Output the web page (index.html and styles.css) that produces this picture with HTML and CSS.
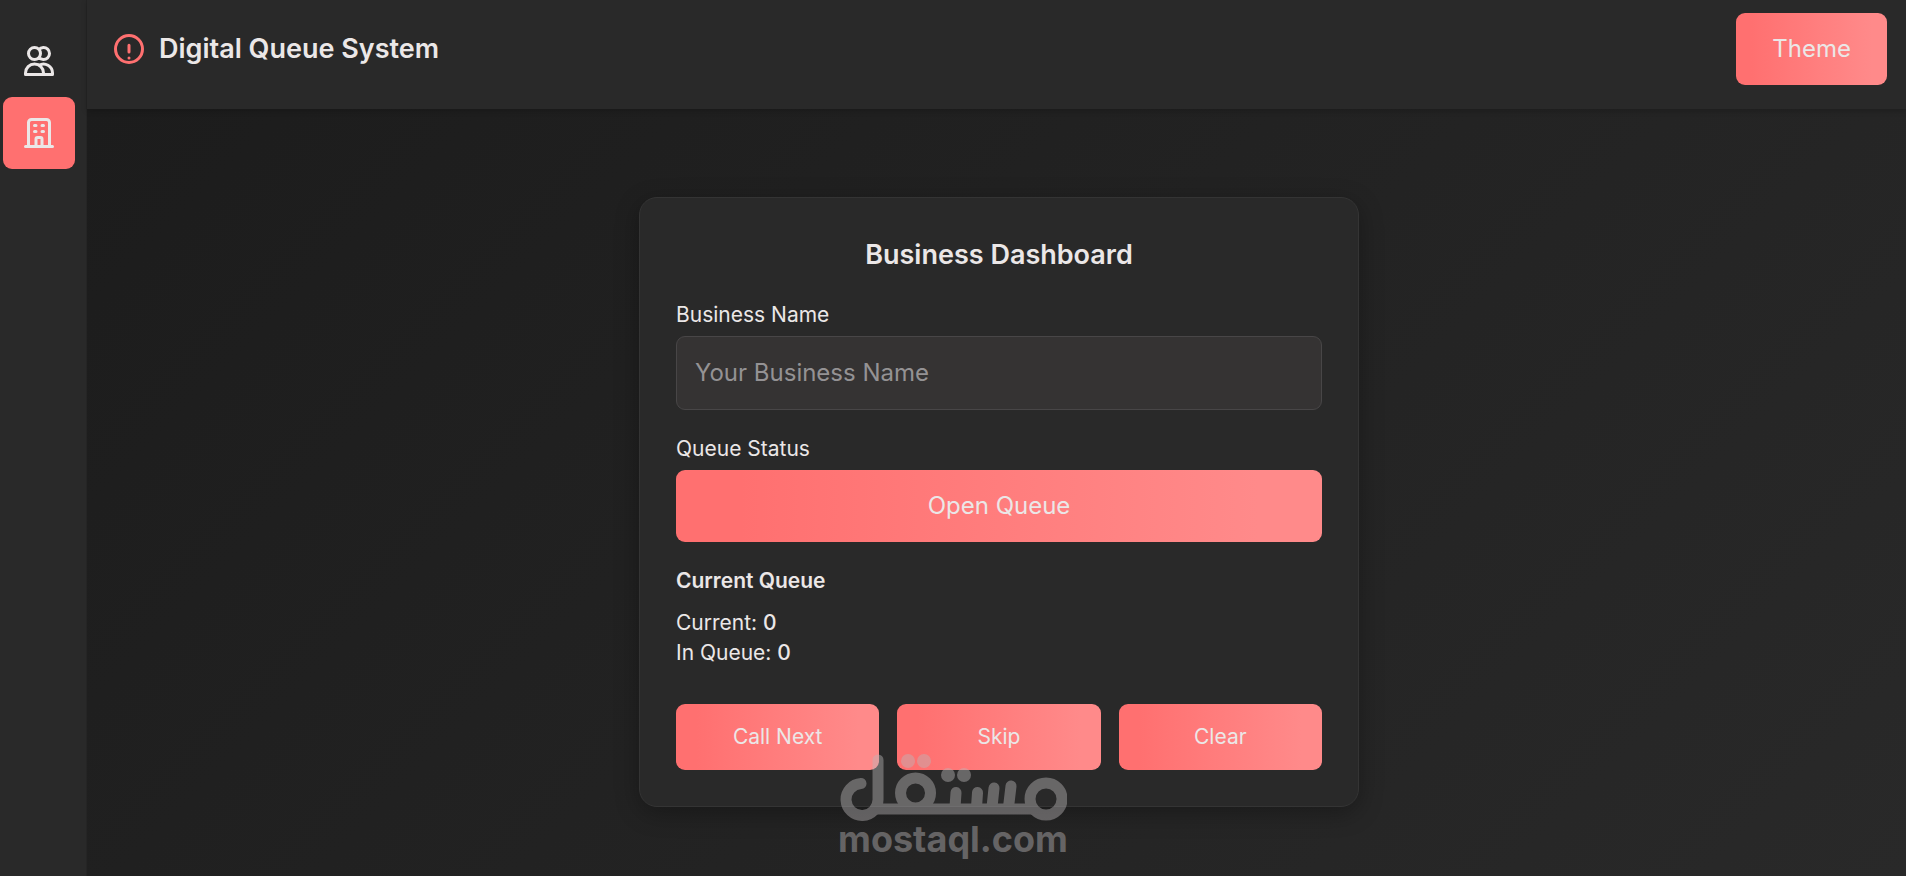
FILE: index.html
```html
<!DOCTYPE html>
<html lang="en">
<head>
<meta charset="utf-8">
<meta name="viewport" content="width=device-width, initial-scale=1">
<title>Digital Queue System</title>
<link rel="stylesheet" href="styles.css">
</head>
<body>
<div class="app">
  <nav class="sidebar" aria-label="Main">
    <button class="nav-button" type="button" aria-label="Customer">
      <svg class="icon" viewBox="0 0 24 24"><path d="M12 4.354a4 4 0 110 5.292M15 21H3v-1a6 6 0 0112 0v1zm0 0h6v-1a6 6 0 00-9-5.197M13 7a4 4 0 11-8 0 4 4 0 018 0z"/></svg>
    </button>
    <button class="nav-button nav-button-active" type="button" aria-label="Business">
      <svg class="icon" viewBox="0 0 24 24"><path d="M19 21V5a2 2 0 00-2-2H7a2 2 0 00-2 2v16m14 0h2m-2 0h-5m-9 0H3m2 0h5M9 7h1m-1 4h1m4-4h1m-1 4h1m-5 10v-5a1 1 0 011-1h2a1 1 0 011 1v5m-4 0h4"/></svg>
    </button>
  </nav>
  <div class="content">
    <header class="header">
      <div class="brand">
        <svg class="icon brand-icon" viewBox="0 0 24 24" aria-hidden="true"><circle cx="12" cy="12" r="9"/><path d="M12 9.500v4.500m0 4h.01"/></svg>
        <h1 class="title">Digital Queue System</h1>
      </div>
      <button class="button" type="button">Theme</button>
    </header>
    <main class="main">
      <section class="card">
        <h2 class="card-title">Business Dashboard</h2>
        <div class="field">
          <label class="label" for="business-name">Business Name</label>
          <input class="input" id="business-name" type="text" placeholder="Your Business Name">
        </div>
        <div class="field">
          <label class="label" for="queue-toggle">Queue Status</label>
          <button class="button" id="queue-toggle" type="button">Open Queue</button>
        </div>
        <div class="queue">
          <h3 class="queue-title">Current Queue</h3>
          <p class="line">Current: <span class="value">0</span></p>
          <p class="line">In Queue: <span class="value">0</span></p>
        </div>
        <div class="actions">
          <button class="button button-small" type="button">Call Next</button>
          <button class="button button-small" type="button">Skip</button>
          <button class="button button-small" type="button">Clear</button>
        </div>
      </section>
    </main>
  </div>
</div>
<div class="watermark">
  <svg class="watermark-logo" viewBox="0 0 228 68" role="img" aria-label="مستقل">
    <g fill="none" stroke="currentColor" stroke-width="11" stroke-linecap="round" stroke-linejoin="round">
      <path d="M22 29.500A16 16 0 1 0 39 45V6"/>
      <path d="M36 55H196" stroke-linecap="butt"/>
      <circle cx="76.500" cy="39" r="15"/>
      <path d="M116 53L117 38.500M137.500 53L138.500 38.500M153 53L155 34M169.500 53L172 32"/>
      <circle cx="207" cy="45" r="16"/>
    </g>
    <g fill="currentColor"><circle cx="69" cy="7" r="7"/><circle cx="85" cy="7" r="7"/><circle cx="109" cy="21" r="7"/><circle cx="125" cy="21" r="7"/></g>
  </svg>
  <span class="watermark-text">mostaql.com</span>
</div>
</body>
</html>
```
FILE: styles.css
```css
* { box-sizing: border-box; }
body {
  margin: 0;
  font-family: Inter, "Liberation Sans", sans-serif;
  color: #ebe7e7;
  background: #1e1e1e;
}
h1, h2, h3, p { margin: 0; }
button, input { font: inherit; color: inherit; }
.app {
  display: flex;
  min-height: 100vh;
  background: linear-gradient(135deg, #1b1b1b, #292929);
}
.sidebar {
  display: flex;
  flex-direction: column;
  width: 87px;
  padding: 25px 3px;
  background: #292929;
  border-right: 1px solid #252525;
}
.nav-button {
  display: flex;
  width: 72px;
  padding: 18px;
  background: none;
  border: 0;
  border-radius: 9px;
}
.nav-button-active { background: #ff7070; }
.icon {
  display: block;
  width: 36px;
  height: 36px;
  fill: none;
  stroke: currentColor;
  stroke-width: 2;
  stroke-linecap: round;
  stroke-linejoin: round;
}
.content {
  display: flex;
  flex: 1;
  flex-direction: column;
}
.header {
  display: flex;
  align-items: flex-start;
  justify-content: space-between;
  padding: 13px 19px 24px 24px;
  background: #292929;
  box-shadow: 0 2px 6px rgba(0, 0, 0, 0.2);
}
.brand {
  display: flex;
  align-items: center;
  gap: 12px;
  height: 72px;
}
.brand-icon { color: #ff7070; }
.title, .card-title {
  font-size: 27px;
  line-height: 42px;
  font-weight: 600;
}
.button {
  padding: 18px 36px;
  font-size: 24px;
  line-height: 36px;
  font-weight: 400;
  background: linear-gradient(90deg, #ff7070 10%, #ff8a8a 90%);
  border: 0;
  border-radius: 9px;
}
.button-small {
  font-size: 21px;
  line-height: 30px;
}
.main {
  display: flex;
  flex: 1;
  align-items: flex-start;
  justify-content: center;
  padding: 88px 0 48px 5px;
}
.card {
  display: flex;
  flex-direction: column;
  width: 720px;
  padding: 36px;
  background: #292929;
  border: 1px solid #343434;
  border-radius: 18px;
  box-shadow: 0 6px 24px rgba(0, 0, 0, 0.3);
}
.card-title { text-align: center; margin-bottom: 24px; }
.field {
  display: flex;
  flex-direction: column;
  gap: 6px;
  margin-bottom: 24px;
}
.label, .line {
  font-size: 21px;
  line-height: 30px;
}
.input {
  padding: 18px;
  font-size: 24px;
  line-height: 36px;
  background: #353333;
  border: 1px solid #484647;
  border-radius: 9px;
}
.input::placeholder { color: #949294; opacity: 1; }
.queue-title {
  margin-bottom: 12px;
  font-size: 21px;
  line-height: 30px;
  font-weight: 600;
}
.value { font-weight: 500; }
.actions {
  display: grid;
  grid-template-columns: repeat(3, 1fr);
  gap: 18px;
  margin-top: 36px;
}
.watermark {
  position: absolute;
  left: 50%;
  bottom: 20px;
  display: flex;
  flex-direction: column;
  align-items: center;
  transform: translateX(-50%);
  pointer-events: none;
  color: #bcb8ba;
  opacity: 0.43;
}
.watermark-logo { width: 228px; }
.watermark-text {
  font: 700 36px/34px Inter, sans-serif;
}
```
